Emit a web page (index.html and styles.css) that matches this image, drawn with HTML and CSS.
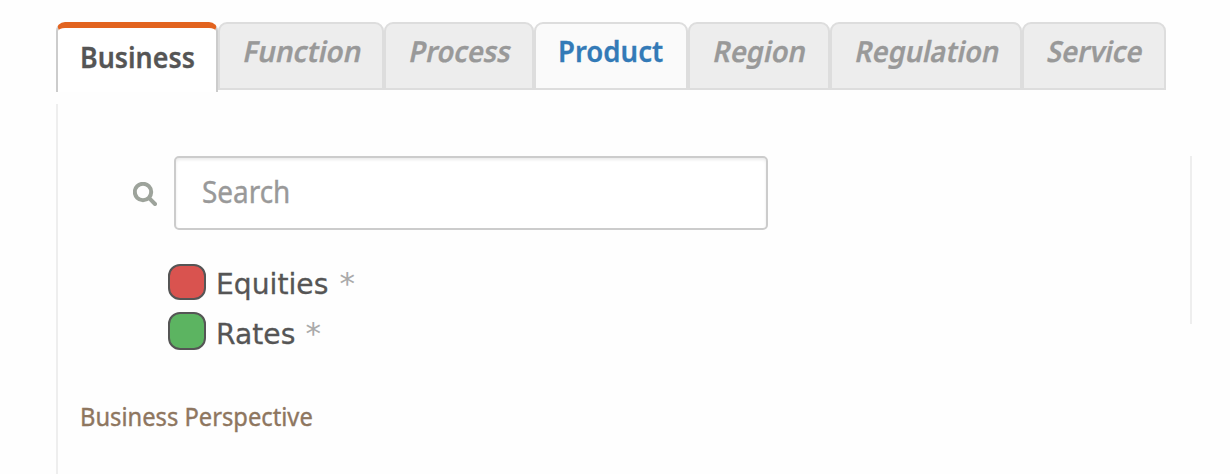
FILE: index.html
```
<!DOCTYPE html>
<html lang="en">
<head>
<meta charset="utf-8">
<title>Business Perspective</title>
<link rel="stylesheet" href="styles.css">
</head>
<body>
<nav class="tabs">
  <a class="tab active business"><span>Business</span></a>
  <a class="tab function"><span>Function</span></a>
  <a class="tab process"><span>Process</span></a>
  <a class="tab hover product"><span>Product</span></a>
  <a class="tab region"><span>Region</span></a>
  <a class="tab regulation"><span>Regulation</span></a>
  <a class="tab service"><span>Service</span></a>
</nav>
<main class="panel">
  <section class="content">
    <div class="search">
      <svg class="search-icon" viewBox="0 0 24 24" width="24" height="24"><circle cx="10" cy="10" r="8.2"/><path d="M16.2 16.2 22 22"/></svg>
      <div class="field"><span>Search</span></div>
    </div>
    <ul class="list">
      <li><i class="swatch red"></i><span class="name">Equities</span><span class="star">*</span></li>
      <li><i class="swatch green"></i><span class="name">Rates</span><span class="star">*</span></li>
    </ul>
    <p class="caption"><span>Business Perspective</span></p>
  </section>
  <div class="divider"></div>
</main>
</body>
</html>
```
FILE: styles.css
```
* { box-sizing: border-box; }
body {
  margin: 0;
  height: 474px;
  overflow: hidden;
  background: #fefefe;
  color: #555;
  font-family: "Noto Sans", sans-serif;
}
.tabs {
  display: flex;
  align-items: flex-start;
  height: 104px;
  padding: 22px 0 0 56px;
}
.tab {
  height: 68px;
  padding: 7px 0 0 22px;
  border: 2px solid #ddd;
  border-radius: 9px 9px 0 0;
  background: #ededed;
  color: #999;
  font-size: 29px;
  font-weight: 600;
  line-height: 40px;
  white-space: nowrap;
}
.tab span, .field span, .caption span, .name {
  display: inline-block;
  transform-origin: 0 50%;
  transform: scaleX(.93);
}
.tab span {
  transform-origin: 0 76%;
  transform: skewX(-12deg) scaleX(.94);
  -webkit-text-stroke: .3px currentColor;
}
.tab.function span { transform: skewX(-12deg) scaleX(.955); }
.tab.regulation span { transform: skewX(-12deg) scaleX(.935); }
.tab.active {
  height: 70px;
  padding: 9px 0 0 22px;
  border: 2px solid #ccc;
  border-top: 6px solid #e2631f;
  border-bottom: 0;
  background: #fff;
  color: #555;
}
.tab.active span { transform: scaleX(.925); }
.tab.hover {
  padding-left: 22px;
  background: #fafafa;
  color: #337ab7;
}
.tab.hover span { transform: scaleX(.95); }
.business { width: 162px; }
.function { width: 166px; }
.process { width: 150px; }
.product { width: 154px; }
.region { width: 142px; }
.regulation { width: 192px; }
.service { width: 144px; }
.panel {
  display: flex;
  justify-content: space-between;
  width: 1136px;
  height: 370px;
  margin-left: 56px;
  border-left: 2px solid #eee;
}
.divider {
  width: 2px;
  height: 168px;
  margin-top: 52px;
  background: #eee;
}
.content { padding-top: 52px; }
.search {
  display: flex;
  align-items: center;
  gap: 17px;
  padding-left: 75px;
}
.search-icon {
  margin-top: 2px;
  fill: none;
  stroke: #9da39b;
  stroke-width: 4;
  stroke-linecap: round;
}
.field {
  width: 594px;
  height: 74px;
  padding: 13px 26px;
  border: 2px solid #ccc;
  border-radius: 5px;
  background: #fff;
  box-shadow: inset 0 2px 3px rgba(0, 0, 0, .08);
  color: #999;
  font-size: 30px;
  line-height: 42px;
}
.field span { -webkit-text-stroke: .4px #999; }
.list {
  display: grid;
  grid-template-rows: 48px 50px;
  margin: 34px 0 0 110px;
  padding: 0;
  list-style: none;
}
.list li { display: flex; }
.swatch {
  width: 38px;
  height: 36px;
  border: 2px solid #555;
  border-radius: 12px;
}
.red { background: #d9534f; }
.green { height: 38px; background: #5cb461; }
.name {
  margin: 0 8px 0 10px;
  font-family: "DejaVu Sans", sans-serif;
  font-size: 29px;
  line-height: 40px;
  transform: scaleX(.972);
  -webkit-text-stroke: .3px #555;
}
.green + .name { line-height: 44px; }
.star {
  color: #aaa;
  font-family: "DejaVu Sans", sans-serif;
  font-size: 31px;
  line-height: 39px;
}
.green ~ .star { line-height: 43px; }
.caption {
  margin: 36px 0 0 22px;
  color: #8e765f;
  font-size: 26px;
  line-height: 36px;
}
.caption span {
  transform: scaleX(.912);
  -webkit-text-stroke: .4px #8e765f;
}
```
